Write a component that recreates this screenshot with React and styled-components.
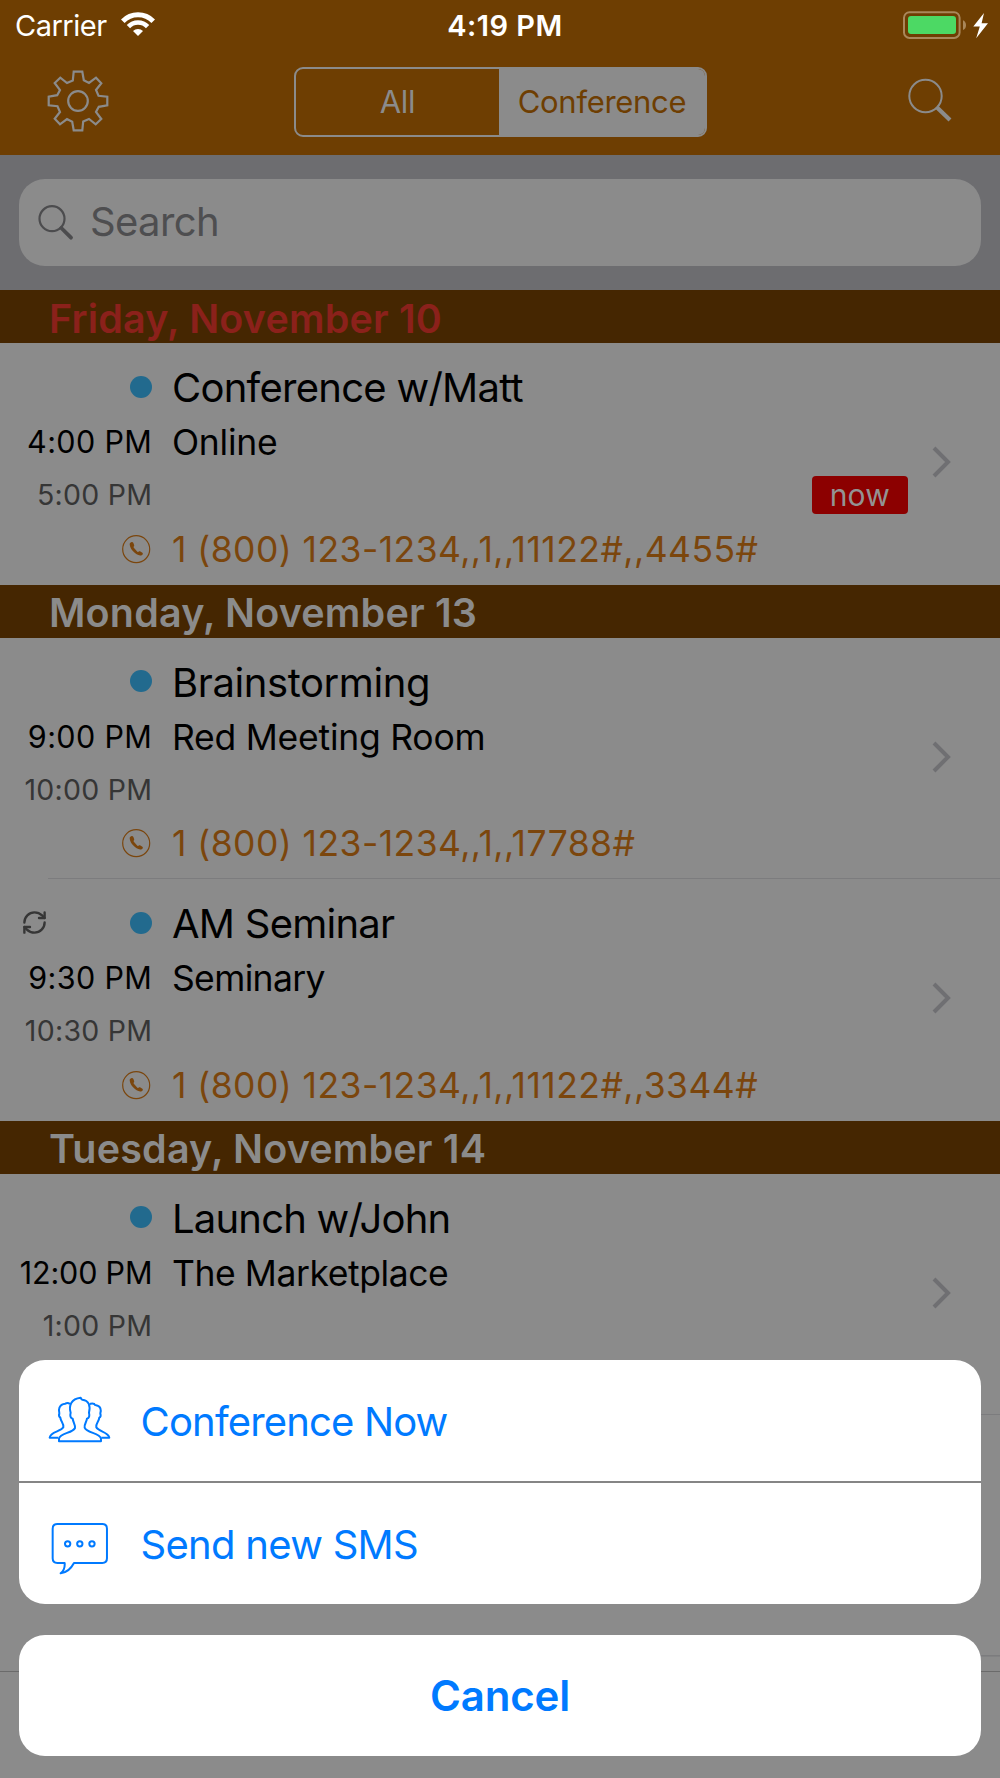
import React                            from 'react';
import styled, { createGlobalStyle }    from 'styled-components';
import { RefreshCw }                    from 'lucide-react';

const colors = {
    nav         : '#6e3e02',
    header      : '#452601',
    surface     : '#8b8b8b',
    searchBar   : '#6d6d70',
    line        : '#7c7c7e',
    phone       : '#7b460d',
    today       : '#8b211b',
    dot         : '#226a8e',
    badge       : '#8c0000',
    muted       : '#363636',
    action      : '#007aff'
};

const sections = [
    {
        day     : 'Friday, November 10',
        today   : true,
        events  : [
            {
                title: 'Conference w/Matt', titleTracking: -0.74,
                place: 'Online', placeTracking: -0.26,
                start: '4:00 PM', end: '5:00 PM',
                phone: '1 (800) 123-1234,,1,,11122#,,4455#',
                now: true
            }
        ]
    },
    {
        day     : 'Monday, November 13',
        events  : [
            {
                title: 'Brainstorming', titleTracking: -0.4,
                place: 'Red Meeting Room', placeTracking: -0.24,
                start: '9:00 PM', end: '10:00 PM',
                phone: '1 (800) 123-1234,,1,,17788#'
            },
            {
                title: 'AM Seminar', titleTracking: -0.75,
                place: 'Seminary', placeTracking: -0.64,
                start: '9:30 PM', end: '10:30 PM',
                phone: '1 (800) 123-1234,,1,,11122#,,3344#',
                repeats: true
            }
        ]
    },
    {
        day     : 'Tuesday, November 14',
        events  : [
            {
                title: 'Launch w/John', titleTracking: -0.8,
                place: 'The Marketplace', placeTracking: -0.43,
                start: '12:00 PM', startTracking: -0.18, end: '1:00 PM'
            },
            {}
        ]
    }
];

const GlobalStyle = createGlobalStyle`
    body {
        margin      : 0;
        background  : ${colors.surface};
        font-family : Inter, "Liberation Sans", sans-serif;
    }

    svg {
        display     : block;
        flex-shrink : 0;
        overflow    : visible;
    }
`;

const Screen = styled.div`
    position        : relative;
    display         : flex;
    flex-direction  : column;
    width           : 1000px;
    height          : 1778px;
    overflow        : hidden;
    background      : ${colors.surface};
`;

const StatusBar = styled.div`
    display                 : grid;
    grid-template-columns   : 1fr auto 1fr;
    align-items             : center;
    flex-shrink             : 0;
    height                  : 50px;
    padding                 : 0 12px 0 15px;
    box-sizing              : border-box;
    background              : ${colors.nav};
    color                   : #fff;
    font-size               : 29px;
`;

const Carrier = styled.div`
    display         : flex;
    align-items     : center;
    gap             : 14.5px;
    letter-spacing  : -0.5px;
`;

const Clock = styled.div`
    padding-left    : 7px;
    font-weight     : 600;
    letter-spacing  : 0.5px;
`;

const Power = styled.div`
    display         : flex;
    justify-self    : end;
    padding-bottom  : 1px;
`;

const NavBar = styled.div`
    display                 : grid;
    grid-template-columns   : 1fr auto 1fr;
    align-items             : center;
    flex-shrink             : 0;
    height                  : 105px;
    padding                 : 0 48px 2px 47px;
    box-sizing              : border-box;
    background              : ${colors.nav};

    > :first-child {
        margin-bottom       : 2px;
    }

    > :last-child {
        justify-self        : end;
        margin-bottom       : 2px;
    }
`;

const Segments = styled.div`
    display         : flex;
    width           : 413px;
    height          : 70px;
    margin-left     : 2px;
    box-sizing      : border-box;
    border          : 2px solid ${colors.surface};
    border-radius   : 9px;
    overflow        : hidden;
`;

const Segment = styled.div`
    width           : ${p => p.$active ? 206 : 203}px;
    display         : flex;
    align-items     : center;
    justify-content : center;
    background      : ${p => p.$active ? colors.surface : 'transparent'};
    color           : ${p => p.$active ? colors.nav : colors.surface};
    font-size       : 31px;
    letter-spacing  : -0.3px;
`;

const SearchBar = styled.div`
    flex-shrink : 0;
    height      : 135px;
    padding     : 24px 19.3px;
    box-sizing  : border-box;
    background  : ${colors.searchBar};
`;

const SearchField = styled.div`
    display         : flex;
    align-items     : center;
    gap             : 17px;
    height          : 87px;
    padding         : 0 0 3px 18.7px;
    box-sizing      : border-box;
    border-radius   : 26px;
    background      : ${colors.surface};
    color           : #4e4e50;
    font-size       : 40px;
    letter-spacing  : -0.62px;

    svg {
        margin-top  : 2px;
    }
`;

const DayHeader = styled.div`
    display         : flex;
    align-items     : center;
    height          : 53.33px;
    padding         : 4px 0 0 49px;
    box-sizing      : border-box;
    background      : ${colors.header};
    color           : ${p => p.$today ? colors.today : colors.surface};
    font-size       : 39.5px;
    font-weight     : 600;
    letter-spacing  : 0.17px;
`;

const Row = styled.div`
    display         : flex;
    align-items     : center;
    height          : 241.33px;
    padding-right   : 49px;
    box-sizing      : border-box;
    background      : linear-gradient(${colors.line}, ${colors.line}) 48px 100% / 100% ${p => p.$last ? 0 : 1.6}px no-repeat;
`;

const Details = styled.div`
    flex                    : 1;
    align-self              : start;
    display                 : grid;
    grid-template-columns   : 152.3px 1fr;
    grid-template-rows      : 54px 54px 53px 54px;
    align-items             : center;
    column-gap              : 19.7px;
    padding-top             : 17px;
    white-space             : nowrap;
`;

const Marks = styled.div`
    display         : flex;
    align-items     : center;
    justify-content : space-between;
    padding         : 0 0 1px 21.3px;
`;

const Dot = styled.span`
    width           : 22px;
    height          : 22px;
    margin-left     : auto;
    border-radius   : 50%;
    background      : ${colors.dot};
`;

const Title = styled.div`
    padding-top     : 1px;
    color           : #000;
    font-size       : 40px;
    letter-spacing  : ${p => p.$tracking}px;
`;

const Place = styled.div`
    padding-top     : 3px;
    color           : #000;
    font-size       : 35.5px;
    letter-spacing  : ${p => p.$tracking}px;
`;

const StartTime = styled.div`
    padding-top     : 1px;
    color           : #000;
    font-size       : 30.5px;
    letter-spacing  : ${p => p.$tracking}px;
    text-align      : right;
`;

const EndTime = styled.div`
    color           : ${colors.muted};
    font-size       : 28.5px;
    letter-spacing  : 0.27px;
    text-align      : right;
`;

const Badge = styled.span`
    justify-self    : end;
    display         : flex;
    align-items     : center;
    justify-content : center;
    width           : 96.5px;
    height          : 38px;
    border-radius   : 4px;
    background      : ${colors.badge};
    color           : #939393;
    font-size       : 30px;
    letter-spacing  : 0.16px;
`;

const PhoneMark = styled.div`
    justify-self    : end;
    padding         : 1px 1.6px 0 0;
`;

const Phone = styled.div`
    padding-top     : 2px;
    color           : ${colors.phone};
    font-size       : 35.5px;
    letter-spacing  : 0.44px;
`;

const ChevronBox = styled.div`
    display         : flex;
    justify-content : flex-end;
    width           : 43px;
    padding-bottom  : 3px;
`;

// bottom edge of the list, the tab bar starts right under it
const TabBar = styled.div`
    flex        : 1;
    margin-top  : 14px;
    border-top  : 1px solid #6b6b6b;
`;

const ActionSheet = styled.div`
    position        : absolute;
    right           : 19.3px;
    bottom          : 22px;
    left            : 19.3px;
    display         : flex;
    flex-direction  : column;
    gap             : 31px;
`;

const Actions = styled.div`
    display         : flex;
    flex-direction  : column;
    border-radius   : 26px;
    overflow        : hidden;
    background      : #fff;
`;

const Action = styled.div`
    display         : flex;
    align-items     : center;
    gap             : 29.3px;
    height          : 121px;
    padding-left    : 28.7px;
    color           : ${colors.action};
    font-size       : 40px;
    letter-spacing  : ${p => p.$tracking}px;

    & + & {
        border-top  : 2px solid #858585;
    }
`;

const ActionLabel = styled.span`
    padding-top     : 2px;
`;

const Cancel = styled.div`
    display         : flex;
    align-items     : center;
    justify-content : center;
    height          : 121px;
    border-radius   : 26px;
    background      : #fff;
    color           : ${colors.action};
    font-size       : 42px;
    font-weight     : 600;
    letter-spacing  : -0.15px;
`;

const WifiIcon = () => (
    <svg width="34" height="26" viewBox="-17 -24 34 26" fill="none" stroke="#fff">
        <path d="M-15.2 -14.8A21.2 21.2 0 0 1 15.2 -14.8" strokeWidth="5" />
        <path d="M-9.6 -9.4A13.4 13.4 0 0 1 9.6 -9.4" strokeWidth="4.6" />
        <path d="M0 0L-5 -5A7.2 7.2 0 0 1 5 -5Z" fill="#fff" stroke="none" />
    </svg>
);

const BatteryIcon = () => (
    <svg width="85" height="30" viewBox="903 9 85 30">
        <rect x="904" y="11.3" width="55.6" height="25.6" rx="5.5" fill="none" stroke="#a9875a" strokeWidth="2" />
        <rect x="908" y="15" width="48" height="18" rx="3" fill="#4cd964" />
        <path d="M963 19.2C967 20.5 967 27.7 963 29Z" fill="#a9875a" />
        <path d="M984 12L973.3 25.6H979.8L976.2 37.2L988 22.3H981.6Z" fill="#fff" />
    </svg>
);

const GearIcon = () => (
    <svg width="62" height="62" viewBox="-31 -31 62 62" fill="none" stroke={colors.surface} strokeWidth="2.2">
        <circle r="9.8" />
        <path d="M-4.3 -29.3H4.3L5.8 -20.8L11 -18L18 -23.3L23.3 -17.7L18 -11L20.5 -5.2L29.3 -4.3V4.3L20.8 5.8L18 11L23.3 18L17.7 23.3L11 18L5.2 20.5L4.3 29.3H-4.3L-5.8 20.8L-11 18L-18 23.3L-23.3 17.7L-18 11L-20.5 5.2L-29.3 4.3V-4.3L-20.8 -5.8L-18 -11L-23.3 -18L-17.7 -23.3L-11 -18L-5.2 -20.5Z" />
    </svg>
);

const NavSearchIcon = () => (
    <svg width="44" height="44" viewBox="907.5 79 44 44" fill="none" stroke={colors.surface}>
        <circle cx="925" cy="96" r="16.2" strokeWidth="2" />
        <path d="M936 107L949.5 120" strokeWidth="4.2" />
    </svg>
);

const FieldSearchIcon = () => (
    <svg width="35" height="35" viewBox="38 204 35 35" fill="none" stroke="#4c4c4e">
        <circle cx="52" cy="217.7" r="12.5" strokeWidth="2.2" />
        <path d="M61.3 227L71 236.7" strokeWidth="3.8" strokeLinecap="round" />
    </svg>
);

const PhoneIcon = () => (
    <svg width="28.4" height="28.4" viewBox="-14.2 -14.2 28.4 28.4">
        <circle r="13.5" fill="none" stroke={colors.phone} strokeWidth="1.2" />
        <path
            d="M-6.5 -4.8C-6.6 -7 -3.6 -8 -2.8 -6.2L-2 -4C-1.8 -2.9 -3.2 -2.6 -2.4 -1.4L1.2 2.5C2.4 3.4 2.6 1.8 3.8 2.1L6.2 3.5C7.6 4.8 5.6 6.5 4 6.2C-0.5 5.6 -6.2 0 -6.5 -4.8Z"
            fill={colors.phone}
        />
    </svg>
);

const ChevronIcon = () => (
    <svg width="19" height="32" viewBox="0 0 19 32" fill="none" stroke="#6f6f72" strokeWidth="4">
        <path d="M2 2L16 16L2 30" />
    </svg>
);

const PeopleIcon = () => (
    <svg width="63.3" height="50" viewBox="24 32 190 150" fill="none" stroke={colors.action} strokeWidth="6" strokeLinejoin="round">
        <path d="M57 168V160C60 142 98 144 105 128C107 119 99 110 98 100C91 98 90 90 92 82C86 62 93 40 122 37C123 40 124 42 127 43C147 45 152 62 147 82C149 90 148 98 141 100C140 110 132 117 134 127C140 144 180 142 183 160V168Z" />
        <path d="M90 56C85 52 79 53 76 55C56 57 55 74 58 84C56 90 58 95 61 97C62 109 72 114 70 126C63 139 31 139 29 157H55" />
        <path d="M149 56C152 56 156 53 163 56C164 59 166 60 168 60C183 62 184 75 181 84C183 90 182 95 178 97C177 109 167 114 169 126C176 139 206 141 208 157H184" />
    </svg>
);

const SmsIcon = () => (
    <svg width="63.3" height="63.7" viewBox="24 380 190 191" fill="none" stroke={colors.action} strokeWidth="6" strokeLinejoin="round">
        <path d="M52 416H187Q201 416 201 430V519Q201 533 187 533H102C92 552 80 562 62 564C74 555 75 545 74 533H52Q38 533 38 519V430Q38 416 52 416Z" />
        <circle cx="83" cy="475.5" r="8" />
        <circle cx="119.5" cy="475.5" r="8" />
        <circle cx="156" cy="475.5" r="8" />
    </svg>
);

const EventRow = ({ event, last }) => (
    <Row $last={last}>
        {event.title && (
            <>
                <Details>
                    <Marks>
                        {event.repeats && <RefreshCw size={27} strokeWidth={2.1} color={colors.muted} />}
                        <Dot />
                    </Marks>
                    <Title $tracking={event.titleTracking}>{event.title}</Title>

                    <StartTime $tracking={event.startTracking || 0.38}>{event.start}</StartTime>
                    <Place $tracking={event.placeTracking}>{event.place}</Place>

                    <EndTime>{event.end}</EndTime>
                    {event.now ? <Badge>now</Badge> : <span />}

                    {event.phone && (
                        <>
                            <PhoneMark><PhoneIcon /></PhoneMark>
                            <Phone>{event.phone}</Phone>
                        </>
                    )}
                </Details>
                <ChevronBox><ChevronIcon /></ChevronBox>
            </>
        )}
    </Row>
);

export default function App() {
    return (
        <Screen>
            <GlobalStyle />
            <StatusBar>
                <Carrier>Carrier <WifiIcon /></Carrier>
                <Clock>4:19 PM</Clock>
                <Power><BatteryIcon /></Power>
            </StatusBar>
            <NavBar>
                <GearIcon />
                <Segments>
                    <Segment>All</Segment>
                    <Segment $active>Conference</Segment>
                </Segments>
                <NavSearchIcon />
            </NavBar>
            <SearchBar>
                <SearchField>
                    <FieldSearchIcon />
                    Search
                </SearchField>
            </SearchBar>

            {sections.map((section, s) => (
                <div key={section.day}>
                    <DayHeader $today={section.today}>{section.day}</DayHeader>
                    {section.events.map((event, i) => (
                        <EventRow
                            key     = {i}
                            event   = {event}
                            last    = {s < sections.length - 1 && i === section.events.length - 1}
                        />
                    ))}
                </div>
            ))}
            <TabBar />

            <ActionSheet>
                <Actions>
                    <Action $tracking={-0.84}><PeopleIcon /><ActionLabel>Conference Now</ActionLabel></Action>
                    <Action $tracking={-0.72}><SmsIcon /><ActionLabel>Send new SMS</ActionLabel></Action>
                </Actions>
                <Cancel>Cancel</Cancel>
            </ActionSheet>
        </Screen>
    );
}
